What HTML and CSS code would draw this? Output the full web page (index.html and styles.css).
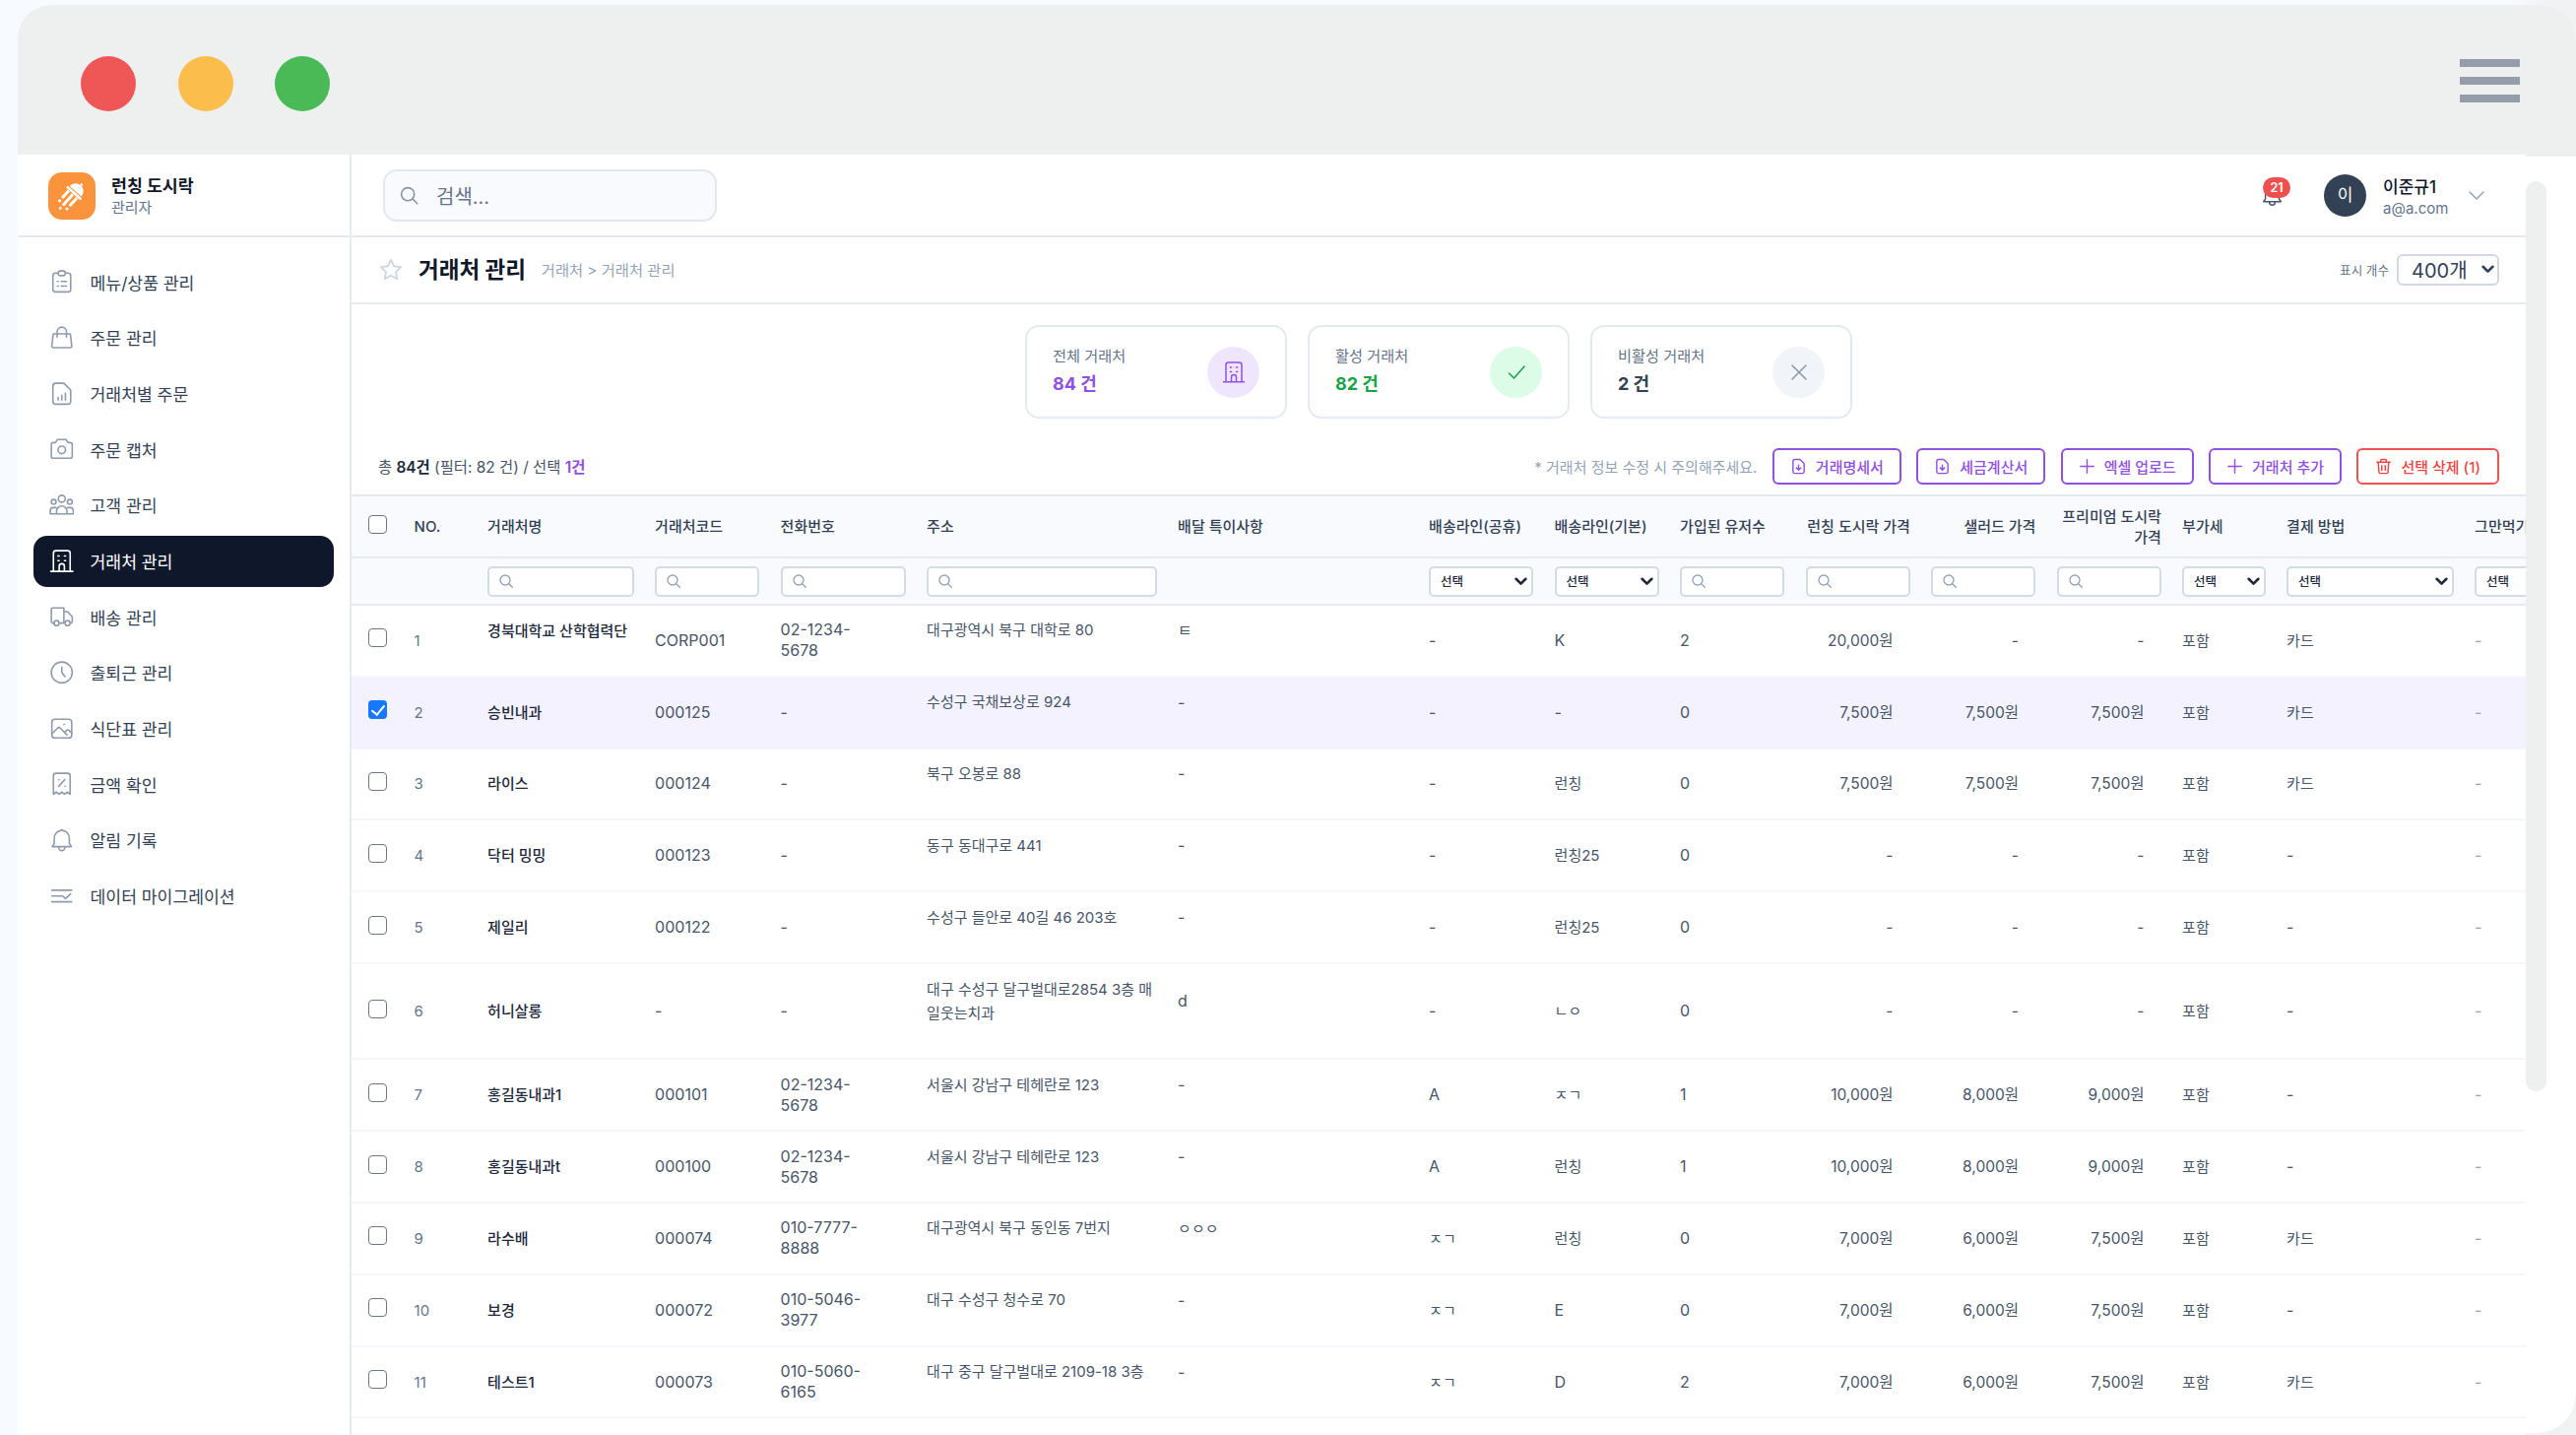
FILE: index.html
```html
<!DOCTYPE html>
<html lang="ko">
<head>
	<meta charset="utf-8">
	<title>거래처 관리</title>
	<link rel="stylesheet" href="styles.css">
</head>
<body>
	<svg class="sprite" width="0" height="0">
		<symbol id="i-search" viewBox="0 0 24 24"><circle cx="10.5" cy="10.5" r="7.5"/><path d="M16 16l5.5 5.5"/></symbol>
		<symbol id="i-clipboard" viewBox="0 0 24 24"><path d="M8.5 4H6a2.5 2.5 0 0 0-2.5 2.5v13A2.5 2.5 0 0 0 6 22h12a2.5 2.5 0 0 0 2.5-2.5v-13A2.5 2.5 0 0 0 18 4h-2.500"/><rect x="8.5" y="2" width="7" height="4.5" rx="2.2"/><path d="M7.800 12h.8M11.500 12h5M7.800 16.500h.8M11.500 16.500h5"/></symbol>
		<symbol id="i-bag" viewBox="0 0 24 24"><path d="M3.800 8.500h16.400l1.300 11.500a1.400 1.400 0 0 1-1.400 1.600H3.900A1.400 1.400 0 0 1 2.500 20zM7.500 11.500V6.500a4.500 4.500 0 0 1 9 0v5"/></symbol>
		<symbol id="i-report" viewBox="0 0 24 24"><path d="M14 2H6a2.500 2.500 0 0 0-2.500 2.500v15A2.500 2.500 0 0 0 6 22h12a2.500 2.500 0 0 0 2.500-2.500v-11zM8.500 15.500V18M12 13.500V18M15.500 11.500V18"/></symbol>
		<symbol id="i-camera" viewBox="0 0 24 24"><path d="M8 3h8l2 3h2a2 2 0 0 1 2 2v11a2 2 0 0 1-2 2H4a2 2 0 0 1-2-2V8a2 2 0 0 1 2-2h2z"/><circle cx="12" cy="13" r="3.600"/></symbol>
		<symbol id="i-people" viewBox="0 0 24 24"><circle cx="12" cy="6" r="3.300"/><circle cx="4.300" cy="9" r="2.300"/><circle cx="19.700" cy="9" r="2.300"/><path d="M7 20.500v-2.500a5 5 0 0 1 10 0v2.500zM6.500 14.500H4A3 3 0 0 0 1 17.500v3h6M17.500 14.500H20a3 3 0 0 1 3 3v3h-6"/></symbol>
		<symbol id="i-building" viewBox="0 0 24 24"><path d="M4 21.500v-17A2.500 2.500 0 0 1 6.500 2h11A2.500 2.500 0 0 1 20 4.500v17M1.500 21.800h21M9.500 21.500V17a2.500 2.500 0 0 1 5 0v4.500M8.300 7h1.200M14.500 7h1.200M8.300 11.500h1.200M14.500 11.500h1.200"/></symbol>
		<symbol id="i-truck" viewBox="0 0 24 24"><path d="M4.500 18.500H3.500A1.500 1.500 0 0 1 2 17V5.500A1.500 1.500 0 0 1 3.500 4H14v14.500H9.500M14 7.500h3.500L22 12.500V17a1.500 1.500 0 0 1-1.500 1.500"/><circle cx="7" cy="18.500" r="2.400"/><circle cx="17.500" cy="18.500" r="2.400"/></symbol>
		<symbol id="i-clock" viewBox="0 0 24 24"><circle cx="12" cy="12" r="10"/><path d="M12 7v5l3 4"/></symbol>
		<symbol id="i-image" viewBox="0 0 24 24"><rect x="2.500" y="3" width="19" height="18" rx="3"/><path d="M3 16.500l5-5a1.800 1.800 0 0 1 2.500 0l6.500 6.500M15 15.500l1.500-1.700a1.800 1.800 0 0 1 2.500 0l2.500 2.500M14 8h.6"/></symbol>
		<symbol id="i-receipt" viewBox="0 0 24 24"><path d="M4 22V4.500A2.500 2.500 0 0 1 6.500 2h11A2.500 2.500 0 0 1 20 4.500V22l-2.700-2-2.600 2-2.700-2-2.700 2-2.600-2zM9 14.500l6-6.500M9 8.300h.3M15 14.300h.3"/></symbol>
		<symbol id="i-bell" viewBox="0 0 24 24"><path d="M2.800 18.500h18.400l-2-3V10.500a7.200 7.200 0 0 0-6-7.300 1.300 1.300 0 0 0-2.400 0 7.200 7.200 0 0 0-6 7.300v5zM9 19a3 3.200 0 0 0 6 0"/></symbol>
		<symbol id="i-data" viewBox="0 0 24 24"><path d="M2.500 6.500h19M2.500 12H13l2.500 2.500L20.500 10M2.500 17.500h19"/></symbol>
		<symbol id="i-file" viewBox="0 0 24 24"><path d="M14 2H6.500A2.500 2.500 0 0 0 4 4.500v15A2.500 2.500 0 0 0 6.500 22h11a2.500 2.500 0 0 0 2.500-2.500V8zM12 10v7M8.800 14l3.200 3.200 3.200-3.200"/></symbol>
		<symbol id="i-plus" viewBox="0 0 24 24"><path d="M12 2.500v19M2.500 12h19"/></symbol>
		<symbol id="i-trash" viewBox="0 0 24 24"><path d="M2.500 6h19M8 6V3.500A1.500 1.500 0 0 1 9.500 2h5A1.500 1.500 0 0 1 16 3.500V6M4.500 6l1 14a2 2 0 0 0 2 2h9a2 2 0 0 0 2-2l1-14M9.500 11v6.500M14.500 11v6.500"/></symbol>
		<symbol id="i-arrow" viewBox="0 0 12 8"><path d="M1.500 1.500L6 6l4.500-4.500"/></symbol>
	</svg>

	<div class="browser">
		<div class="browser-bar">
			<span class="dot red"></span>
			<span class="dot yellow"></span>
			<span class="dot green"></span>
			<div class="burger"><i></i><i></i><i></i></div>
		</div>

		<div class="browser-body">
			<aside class="sidebar">
				<div class="brand">
					<svg class="logo" viewBox="0 0 48 48"><rect width="48" height="48" rx="14"/><g transform="translate(27 20) rotate(42)"><path d="M-8-1a8 8 0 0 1 16 0z"/><circle cx="0" cy="-10" r="1.400"/><rect x="-10" y="0" width="20" height="2.600" rx="1.300"/><path d="M-7 3h3v9a1.500 1.500 0 0 1-3 0zM-1.500 3h3v14a1.500 1.500 0 0 1-3 0zM4 3h3v10a1.500 1.500 0 0 1-3 0z"/><circle cx="-5.500" cy="17" r="1.500"/><circle cx="0" cy="22" r="1.500"/><circle cx="5.500" cy="18" r="1.500"/></g></svg>
					<div>
						<div class="brand-name">런칭 도시락</div>
						<div class="brand-role">관리자</div>
					</div>
				</div>
				<ul class="menu">
					<li><svg><use href="#i-clipboard"/></svg>메뉴/상품 관리</li>
					<li><svg><use href="#i-bag"/></svg>주문 관리</li>
					<li><svg><use href="#i-report"/></svg>거래처별 주문</li>
					<li><svg><use href="#i-camera"/></svg>주문 캡처</li>
					<li><svg><use href="#i-people"/></svg>고객 관리</li>
					<li class="active"><svg><use href="#i-building"/></svg>거래처 관리</li>
					<li><svg><use href="#i-truck"/></svg>배송 관리</li>
					<li><svg><use href="#i-clock"/></svg>출퇴근 관리</li>
					<li><svg><use href="#i-image"/></svg>식단표 관리</li>
					<li><svg><use href="#i-receipt"/></svg>금액 확인</li>
					<li><svg><use href="#i-bell"/></svg>알림 기록</li>
					<li><svg><use href="#i-data"/></svg>데이터 마이그레이션</li>
				</ul>
			</aside>

			<main class="main">
				<header class="topbar">
					<div class="search"><svg><use href="#i-search"/></svg>검색...</div>
					<div class="bell"><svg><use href="#i-bell"/></svg><span class="badge">21</span></div>
					<div class="avatar">이</div>
					<div class="user">
						<div class="user-name">이준규1</div>
						<div class="user-mail">a@a.com</div>
					</div>
					<svg class="user-arrow" viewBox="0 0 16 9"><path d="M1 1l7 7 7-7"/></svg>
				</header>

				<div class="page-head">
					<svg class="star" viewBox="0 0 24 24"><path d="M12 1.800l3.100 6.500 7.100.9-5.200 4.900 1.300 7.100L12 17.700l-6.300 3.500L7 14.100 1.800 9.200l7.100-.9z"/></svg>
					<h1>거래처 관리</h1>
					<span class="crumb">거래처 &gt; 거래처 관리</span>
					<span class="count-label">표시 개수</span>
					<span class="count-select">400개<svg class="arrow"><use href="#i-arrow"/></svg></span>
				</div>

				<div class="stats">
					<div class="stat purple">
						<div><p>전체 거래처</p><b>84 건</b></div>
						<span class="stat-icon"><svg><use href="#i-building"/></svg></span>
					</div>
					<div class="stat green">
						<div><p>활성 거래처</p><b>82 건</b></div>
						<span class="stat-icon"><svg viewBox="0 0 24 24"><path d="M4.500 13l5 5L20 6"/></svg></span>
					</div>
					<div class="stat gray">
						<div><p>비활성 거래처</p><b>2 건</b></div>
						<span class="stat-icon"><svg viewBox="0 0 24 24"><path d="M5 5l14 14M19 5L5 19"/></svg></span>
					</div>
				</div>

				<div class="toolbar">
					<div class="total">총 <b>84건</b> (필터: 82 건) / 선택 <b class="sel">1건</b></div>
					<span class="notice">* 거래처 정보 수정 시 주의해주세요.</span>
					<button class="btn"><svg><use href="#i-file"/></svg>거래명세서</button>
					<button class="btn"><svg><use href="#i-file"/></svg>세금계산서</button>
					<button class="btn"><svg><use href="#i-plus"/></svg>엑셀 업로드</button>
					<button class="btn"><svg><use href="#i-plus"/></svg>거래처 추가</button>
					<button class="btn danger"><svg><use href="#i-trash"/></svg>선택 삭제 (1)</button>
				</div>

				<table class="list">
					<colgroup>
						<col class="w-check"><col class="w-no"><col class="w-name"><col class="w-m"><col class="w-tel"><col class="w-l"><col class="w-l"><col class="w-m"><col class="w-m"><col class="w-m"><col class="w-m"><col class="w-m"><col class="w-m"><col class="w-vat"><col class="w-pay"><col class="w-m">
					</colgroup>
					<thead>
						<tr class="titles">
							<th><input type="checkbox"></th>
							<th>NO.</th>
							<th>거래처명</th>
							<th>거래처코드</th>
							<th>전화번호</th>
							<th>주소</th>
							<th>배달 특이사항</th>
							<th>배송라인(공휴)</th>
							<th>배송라인(기본)</th>
							<th>가입된 유저수</th>
							<th class="r">런칭 도시락 가격</th>
							<th class="r">샐러드 가격</th>
							<th class="r">프리미엄 도시락 가격</th>
							<th>부가세</th>
							<th>결제 방법</th>
							<th>그만먹기</th>
						</tr>
						<tr class="filters">
							<th></th>
							<th></th>
							<th><span class="field"><svg><use href="#i-search"/></svg></span></th>
							<th><span class="field"><svg><use href="#i-search"/></svg></span></th>
							<th><span class="field"><svg><use href="#i-search"/></svg></span></th>
							<th><span class="field"><svg><use href="#i-search"/></svg></span></th>
							<th></th>
							<th><span class="field pick">선택<svg class="arrow"><use href="#i-arrow"/></svg></span></th>
							<th><span class="field pick">선택<svg class="arrow"><use href="#i-arrow"/></svg></span></th>
							<th><span class="field"><svg><use href="#i-search"/></svg></span></th>
							<th><span class="field"><svg><use href="#i-search"/></svg></span></th>
							<th><span class="field"><svg><use href="#i-search"/></svg></span></th>
							<th><span class="field"><svg><use href="#i-search"/></svg></span></th>
							<th><span class="field pick">선택<svg class="arrow"><use href="#i-arrow"/></svg></span></th>
							<th><span class="field pick">선택<svg class="arrow"><use href="#i-arrow"/></svg></span></th>
							<th><span class="field pick">선택<svg class="arrow"><use href="#i-arrow"/></svg></span></th>
						</tr>
					</thead>
					<tbody>
						<tr><td><input type="checkbox"></td><td class="no">1</td><td class="name up">경북대학교 산학협력단</td><td>CORP001</td><td>02-1234-<br>5678</td><td class="addr up">대구광역시 북구 대학로 80</td><td class="up">ㅌ</td><td>-</td><td>K</td><td>2</td><td class="won">20,000원</td><td class="won">-</td><td class="won">-</td><td class="ko">포함</td><td class="ko">카드</td><td class="off">-</td></tr>
						<tr class="on"><td><input type="checkbox" checked></td><td class="no">2</td><td class="name">승빈내과</td><td>000125</td><td>-</td><td class="addr up">수성구 국채보상로 924</td><td class="up">-</td><td>-</td><td>-</td><td>0</td><td class="won">7,500원</td><td class="won">7,500원</td><td class="won">7,500원</td><td class="ko">포함</td><td class="ko">카드</td><td class="off">-</td></tr>
						<tr><td><input type="checkbox"></td><td class="no">3</td><td class="name">라이스</td><td>000124</td><td>-</td><td class="addr up">북구 오봉로 88</td><td class="up">-</td><td>-</td><td class="ko">런칭</td><td>0</td><td class="won">7,500원</td><td class="won">7,500원</td><td class="won">7,500원</td><td class="ko">포함</td><td class="ko">카드</td><td class="off">-</td></tr>
						<tr><td><input type="checkbox"></td><td class="no">4</td><td class="name">닥터 밍밍</td><td>000123</td><td>-</td><td class="addr up">동구 동대구로 441</td><td class="up">-</td><td>-</td><td class="ko">런칭25</td><td>0</td><td class="won">-</td><td class="won">-</td><td class="won">-</td><td class="ko">포함</td><td>-</td><td class="off">-</td></tr>
						<tr><td><input type="checkbox"></td><td class="no">5</td><td class="name">제일리</td><td>000122</td><td>-</td><td class="addr up">수성구 들안로 40길 46 203호</td><td class="up">-</td><td>-</td><td class="ko">런칭25</td><td>0</td><td class="won">-</td><td class="won">-</td><td class="won">-</td><td class="ko">포함</td><td>-</td><td class="off">-</td></tr>
						<tr class="tall"><td><input type="checkbox"></td><td class="no">6</td><td class="name">허니살롱</td><td>-</td><td>-</td><td class="addr up">대구 수성구 달구벌대로2854 3층 매일웃는치과</td><td class="up">d</td><td>-</td><td class="ko">ㄴㅇ</td><td>0</td><td class="won">-</td><td class="won">-</td><td class="won">-</td><td class="ko">포함</td><td>-</td><td class="off">-</td></tr>
						<tr><td><input type="checkbox"></td><td class="no">7</td><td class="name">홍길동내과1</td><td>000101</td><td>02-1234-<br>5678</td><td class="addr up">서울시 강남구 테헤란로 123</td><td class="up">-</td><td>A</td><td class="ko">ㅈㄱ</td><td>1</td><td class="won">10,000원</td><td class="won">8,000원</td><td class="won">9,000원</td><td class="ko">포함</td><td>-</td><td class="off">-</td></tr>
						<tr><td><input type="checkbox"></td><td class="no">8</td><td class="name">홍길동내과t</td><td>000100</td><td>02-1234-<br>5678</td><td class="addr up">서울시 강남구 테헤란로 123</td><td class="up">-</td><td>A</td><td class="ko">런칭</td><td>1</td><td class="won">10,000원</td><td class="won">8,000원</td><td class="won">9,000원</td><td class="ko">포함</td><td>-</td><td class="off">-</td></tr>
						<tr><td><input type="checkbox"></td><td class="no">9</td><td class="name">라수배</td><td>000074</td><td>010-7777-<br>8888</td><td class="addr up">대구광역시 북구 동인동 7번지</td><td class="ko up">ㅇㅇㅇ</td><td class="ko">ㅈㄱ</td><td class="ko">런칭</td><td>0</td><td class="won">7,000원</td><td class="won">6,000원</td><td class="won">7,500원</td><td class="ko">포함</td><td class="ko">카드</td><td class="off">-</td></tr>
						<tr><td><input type="checkbox"></td><td class="no">10</td><td class="name">보경</td><td>000072</td><td>010-5046-<br>3977</td><td class="addr up">대구 수성구 청수로 70</td><td class="up">-</td><td class="ko">ㅈㄱ</td><td>E</td><td>0</td><td class="won">7,000원</td><td class="won">6,000원</td><td class="won">7,500원</td><td class="ko">포함</td><td>-</td><td class="off">-</td></tr>
						<tr><td><input type="checkbox"></td><td class="no">11</td><td class="name">테스트1</td><td>000073</td><td>010-5060-<br>6165</td><td class="addr up">대구 중구 달구벌대로 2109-18 3층</td><td class="up">-</td><td class="ko">ㅈㄱ</td><td>D</td><td>2</td><td class="won">7,000원</td><td class="won">6,000원</td><td class="won">7,500원</td><td class="ko">포함</td><td class="ko">카드</td><td class="off">-</td></tr>
					</tbody>
				</table>
			</main>

			<div class="scroll"><span></span></div>
		</div>
	</div>
</body>
</html>
```
FILE: styles.css
```css
*{
	box-sizing: border-box;
}
body{
	margin: 0;
	padding: 5px 0 0 18px;
	height: 1457px;
	overflow: hidden;
	background: linear-gradient(90deg, #f7faff 2550px, #f0f2f4 2590px);
	color: #475569;
	font-family: Inter, "Noto Sans CJK KR", sans-serif;
	font-size: 15px;
}
svg{
	fill: none;
	stroke: currentColor;
	stroke-width: 1.5;
	stroke-linecap: round;
	stroke-linejoin: round;
	flex: none;
}
.sprite{
	position: absolute;
}
p, h1, ul{
	margin: 0;
	padding: 0;
}

/* 브라우저 창 */
.browser{
	width: 2598px;
	height: 1450px;
	border-radius: 34px 34px 40px 0;
	background: #fff;
}
.browser-bar{
	height: 154px;
	margin-bottom: -2px;
	padding: 0 57px 0 64px;
	display: flex;
	align-items: center;
	gap: 42.5px;
	border-radius: 34px 34px 0 0;
	background: #eef0ef;
}
.dot{
	width: 56px;
	height: 56px;
	border-radius: 50%;
	margin-top: 5px;
}
.dot.red{
	background: #ee5755;
}
.dot.yellow{
	background: #fbbd4c;
}
.dot.green{
	background: #49ba56;
}
.burger{
	margin-left: auto;
	display: flex;
	flex-direction: column;
	gap: 10px;
}
.burger i{
	width: 61px;
	height: 8px;
	background: #959dab;
}
.browser-body{
	display: flex;
	height: 1300px;
}

/* 사이드바 */
.sidebar{
	flex: none;
	width: 339px;
	border-right: 2px solid #e6eaf1;
	background: #fff;
}
.brand{
	display: flex;
	align-items: center;
	gap: 16px;
	height: 84px;
	padding: 2px 0 0 31px;
	border-bottom: 2px solid #e4e9f0;
}
.logo{
	width: 48px;
	height: 48px;
	stroke: none;
	fill: #fff;
}
.logo > rect{
	fill: #fb923c;
}
.brand-name{
	font-size: 17.3px;
	line-height: 24px;
	font-weight: 700;
	color: #0f172a;
}
.brand-role{
	line-height: 20px;
	color: #64748b;
}
.menu{
	list-style: none;
	padding: 19.5px 16px 0 15.5px;
}
.menu li{
	display: flex;
	align-items: center;
	gap: 16.5px;
	height: 52px;
	margin-bottom: 4.7px;
	padding: 0 0 1px 16px;
	border-radius: 14px;
	font-size: 17.2px;
	color: #334155;
}
.menu svg{
	width: 25.5px;
	height: 25.5px;
	color: #8f9bad;
}
.menu .active{
	background: #0f172a;
	color: #fff;
}
.menu .active svg{
	color: #fff;
}

/* 상단바 */
.main{
	flex: none;
	width: 2208px;
	overflow: hidden;
	background: #fff;
}
.topbar{
	display: flex;
	align-items: center;
	height: 84px;
	padding: 0 42px 0 32px;
	border-bottom: 2px solid #e4e9f0;
}
.search{
	display: flex;
	align-items: center;
	gap: 17px;
	width: 339px;
	height: 53px;
	padding-left: 14px;
	border: 2px solid #e2e8f0;
	border-radius: 14px;
	background: #f9fafe;
	font-size: 20px;
	color: #64748b;
}
.search svg{
	width: 21px;
	height: 21px;
	color: #8793a6;
	stroke-width: 1.8;
}
.bell{
	position: relative;
	margin-left: auto;
	margin-right: 41px;
	width: 23px;
	height: 23px;
	color: #475569;
}
.bell svg{
	width: 23px;
	height: 23px;
}
.badge{
	position: absolute;
	left: 2px;
	top: -7px;
	width: 28px;
	height: 21px;
	border-radius: 11px;
	background: #ee5050;
	color: #fff;
	font-size: 12.5px;
	line-height: 21px;
	font-weight: 600;
	text-align: center;
}
.avatar{
	width: 43px;
	height: 43px;
	margin: 1px 17px 0 0;
	border-radius: 50%;
	background: #334155;
	color: #fff;
	font-size: 17px;
	line-height: 42px;
	text-align: center;
}
.user{
	width: 87px;
	padding-top: 3px;
}
.user-name{
	font-size: 17px;
	line-height: 24px;
	font-weight: 500;
	color: #0f172a;
}
.user-mail{
	line-height: 20px;
	color: #64748b;
}
.user-arrow{
	width: 16px;
	height: 9px;
	color: #94a3b8;
}

/* 제목 */
.page-head{
	display: flex;
	align-items: center;
	height: 68px;
	padding: 0 27px 0 28px;
	border-bottom: 2px solid #e6eaf1;
}
.star{
	width: 24px;
	height: 24px;
	margin-right: 16px;
	color: #cbd5e1;
	stroke-width: 1.8;
}
.page-head h1{
	margin-right: 16px;
	padding-bottom: 1px;
	font-size: 22.5px;
	line-height: 30px;
	color: #0f172a;
}
.crumb{
	padding-bottom: 3px;
	font-size: 15.3px;
	color: #94a3b8;
}
.count-label{
	margin-left: auto;
	margin-right: 8px;
	padding-bottom: 1px;
	font-size: 12.6px;
	color: #64748b;
}
.count-select{
	display: flex;
	align-items: center;
	gap: 14px;
	width: 104px;
	height: 32px;
	padding: 0 0 1px 13px;
	border: 2px solid #cfd8e3;
	border-radius: 6px;
	font-size: 20px;
	color: #334155;
}
.arrow{
	width: 13px;
	height: 9px;
	stroke-width: 2.4;
	color: #334155;
}

/* 통계 카드 */
.stats{
	display: flex;
	justify-content: center;
	gap: 21px;
	padding: 21px 0 30px;
}
.stat{
	display: flex;
	align-items: center;
	justify-content: space-between;
	width: 266px;
	height: 95px;
	padding: 0 26px;
	border: 2px solid #e4eaf2;
	border-radius: 14px;
}
.stat p{
	line-height: 21px;
	font-size: 15.2px;
	color: #64748b;
}
.stat b{
	display: block;
	margin-top: 4px;
	font-size: 18px;
	line-height: 28px;
}
.stat-icon{
	display: flex;
	align-items: center;
	justify-content: center;
	width: 53px;
	height: 52px;
	border-radius: 50%;
}
.stat-icon svg{
	width: 24px;
	height: 24px;
}
.purple b, .purple svg{
	color: #9050e0;
}
.purple .stat-icon{
	background: #efe6fd;
}
.green b, .green svg{
	color: #16a34a;
}
.green .stat-icon{
	background: #dcfce7;
}
.gray b{
	color: #334155;
}
.gray svg{
	color: #8a96a8;
}
.gray .stat-icon{
	background: #f1f4f9;
}

/* 버튼 줄 */
.toolbar{
	display: flex;
	align-items: center;
	gap: 15.4px;
	height: 37px;
	margin-bottom: 10px;
	padding: 0 27px;
}
.total{
	margin-right: auto;
	padding-bottom: 1px;
	font-size: 15.4px;
}
.total b{
	font-weight: 600;
	color: #1e293b;
}
.total .sel{
	color: #9050e0;
}
.notice{
	padding-bottom: 1px;
	color: #94a3b8;
}
.btn{
	display: flex;
	align-items: center;
	gap: 9px;
	height: 37px;
	padding: 0 16px;
	border: 2px solid #9050e0;
	border-radius: 6px;
	background: #fff;
	color: #9050e0;
	font: 500 15px Inter, "Noto Sans CJK KR", sans-serif;
}
.btn svg{
	width: 17px;
	height: 17px;
	stroke-width: 2;
}
.btn.danger{
	padding: 0 17px;
	border-color: #ef5350;
	color: #ef4444;
}

/* 거래처 표 */
.list{
	width: 2273px;
	table-layout: fixed;
	border-spacing: 0;
}
.w-check{ width: 53px; }
.w-no{ width: 74.5px; }
.w-name{ width: 170px; }
.w-m{ width: 127.5px; }
.w-tel{ width: 148.5px; }
.w-l{ width: 255px; }
.w-vat{ width: 106px; }
.w-pay{ width: 191px; }
.list th, .list td{
	padding: 0 10.6px;
	text-align: left;
	vertical-align: middle;
}
.list th{
	background: #f9fafe;
	border-bottom: 2px solid #e6ebf2;
	font-weight: 500;
	line-height: 21px;
	color: #334155;
	white-space: nowrap;
}
.titles th{
	height: 65px;
	border-top: 2px solid #e2e8f0;
}
.filters th{
	height: 48px;
}
.list th.r{
	text-align: right;
	white-space: normal;
}
.list td{
	height: 72.8px;
	border-bottom: 2px solid #f4f6f9;
	font-size: 16px;
	line-height: 21px;
	color: #475569;
}
.list .tall td{
	height: 97.5px;
}
.on td{
	background: #f4f2fe;
	border-color: #f4f2fe;
}
.list th:first-child, .list td:first-child{
	padding: 0 0 5px 17px;
	line-height: 0;
}
.list td.no{
	font-size: 15px;
	color: #64748b;
}
.list td.name{
	font-size: 15px;
	font-weight: 500;
	color: #1e293b;
	white-space: nowrap;
}
.list td.addr{
	font-size: 15px;
	line-height: 24px;
	word-break: break-all;
}
.list td.ko{
	font-size: 15px;
}
.list td.up{
	padding-bottom: 20px;
}
.list td.won{
	padding-right: 28px;
	font-size: 15.5px;
	text-align: right;
}
.list td.off{
	color: #94a3b8;
}
.list input{
	appearance: none;
	width: 19px;
	height: 19px;
	margin: 0;
	border: 1.5px solid #6b7789;
	border-radius: 4px;
	background: #fff;
}
.list input:checked{
	border: 0;
	background: #1677ff;
}
.list input:checked:after{
	content: "";
	display: block;
	width: 6px;
	height: 11px;
	margin: 2px 0 0 6px;
	border: solid #fff;
	border-width: 0 2.5px 2.5px 0;
	transform: rotate(40deg);
}
.field{
	display: flex;
	align-items: center;
	height: 31px;
	padding-left: 9px;
	border: 2px solid #d3dbe5;
	border-radius: 5px;
	background: #fff;
}
.field svg{
	width: 16px;
	height: 16px;
	color: #94a3b8;
	stroke-width: 2;
}
.pick{
	justify-content: space-between;
	padding: 0 4px 0 10px;
	font-size: 12.5px;
	color: #1e293b;
}
.field .arrow{
	width: 13px;
	height: 9px;
	color: #1e293b;
	stroke-width: 2.4;
}

/* 스크롤바 */
.scroll{
	padding-top: 27px;
}
.scroll span{
	display: block;
	width: 21px;
	height: 924px;
	border-radius: 11px;
	background: #eef0ef;
}
```
